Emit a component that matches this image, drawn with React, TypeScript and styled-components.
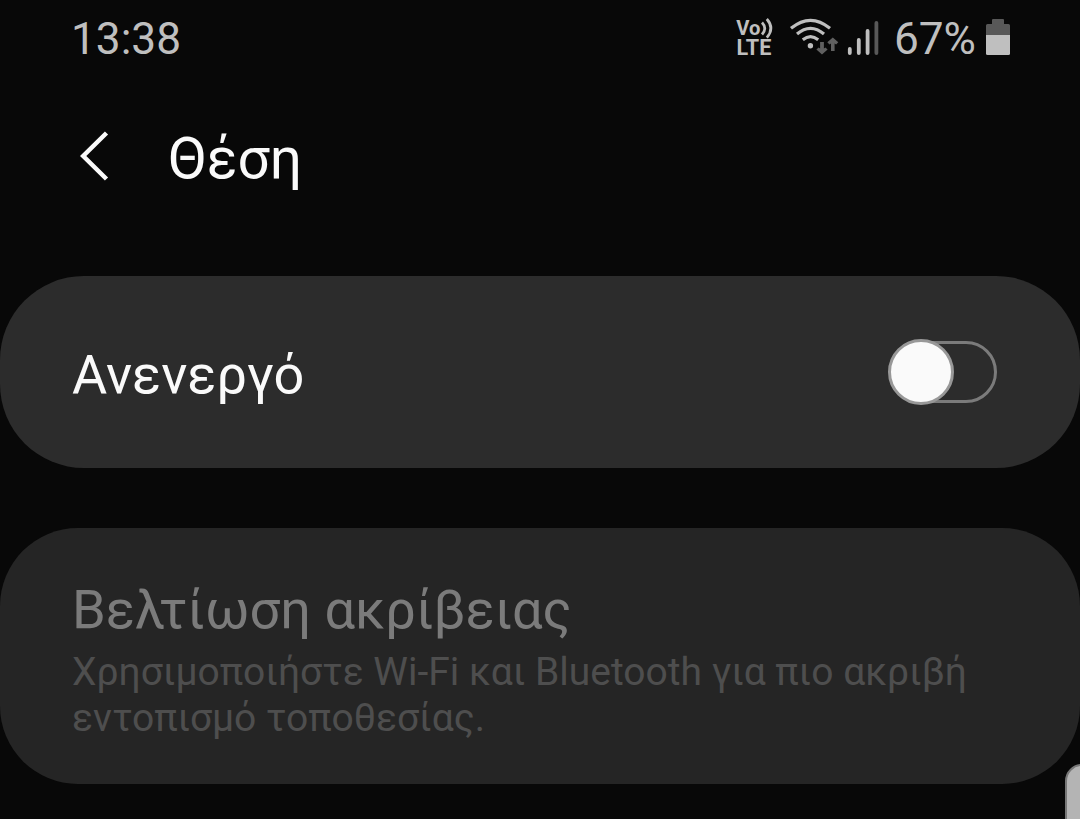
import React from 'react';
import styled, { createGlobalStyle } from 'styled-components';

const GlobalStyle = createGlobalStyle`
  *, *::before, *::after { box-sizing: border-box; }
  html, body { margin: 0; background: #080808; overflow: hidden; }
  body { font-family: Roboto, "Noto Sans", sans-serif; }
`;

const Screen = styled.main`
  position: relative;
  width: 1080px;
  height: 819px;
  background: #080808;
  color: #fafafa;
  overflow: hidden;
`;

const StatusBar = styled.header`
  display: flex;
  justify-content: space-between;
  height: 77px;
  padding: 0 70px 0 71px;
  color: #bfbfbf;
  font-size: 44.2px;
  line-height: 78px;
`;

const StatusIcons = styled.div`
  display: flex;
  align-items: flex-start;
`;

const StatusGlyphs = styled.svg`
  display: block;
  width: 150px;
  height: 77px;
  margin-right: 11.5px;
`;

const BatteryIcon = styled.svg`
  display: block;
  width: 24px;
  height: 77px;
  margin-left: 10px;
`;

const TitleBar = styled.div`
  display: flex;
  align-items: center;
  height: 164px;
  padding-left: 80px;
`;

const BackButton = styled.button`
  display: flex;
  width: 88px;
  height: 50px;
  margin-top: -6px;
  padding: 0;
  border: 0;
  background: none;
  color: #fafafa;
`;

const Title = styled.h1`
  margin: 0 0 1px;
  font-size: 57px;
  line-height: 69px;
  font-weight: 400;
`;

const Cards = styled.div`
  display: flex;
  flex-direction: column;
  gap: 60px;
  margin-top: 35px;
`;

const SwitchCard = styled.section`
  display: flex;
  align-items: center;
  justify-content: space-between;
  height: 192px;
  padding: 0 83px 0 72px;
  border-radius: 84px;
  background: #2c2c2c;
`;

const SwitchLabel = styled.span`
  padding-top: 5px;
  font-size: 54px;
  line-height: 63px;
`;

const Track = styled.button`
  display: flex;
  align-items: center;
  width: 106px;
  height: 62px;
  padding: 0;
  border: 3px solid #7b7b7b;
  border-radius: 31px;
  background: transparent;
`;

const Knob = styled.span`
  flex: none;
  width: 66px;
  height: 66px;
  margin-left: -6px;
  border: 3px solid #989898;
  border-radius: 50%;
  background: #fafafa;
`;

const OptionCard = styled.section`
  height: 256px;
  padding: 50px 72px 0;
  border-radius: 78px;
  background: #252525;
`;

const OptionTitle = styled.h2`
  margin: 0 0 8px;
  color: #7b7b7b;
  font-size: 54.2px;
  line-height: 63px;
  font-weight: 400;
`;

const OptionText = styled.p`
  margin: 0;
  color: #4e4e4e;
  font-size: 39px;
  line-height: 46px;
  white-space: nowrap;
`;

const EdgeHandle = styled.div`
  position: absolute;
  left: 1065px;
  top: 764px;
  width: 40px;
  height: 90px;
  border: 2px solid #777;
  border-radius: 17px;
  background: #b4b4b4;
`;

export default function App() {
  return (
    <Screen>
      <GlobalStyle />
      <StatusBar>
        <span>13:38</span>
        <StatusIcons>
          <StatusGlyphs viewBox="732 0 150 77" fill="none" strokeLinecap="round">
            <g fill="#bfbfbf" fontFamily="Roboto, sans-serif" fontWeight="700" fontSize="21">
              <text x="736.3" y="34.6" textLength="24.2" lengthAdjust="spacingAndGlyphs">Vo</text>
              <text x="736.5" y="55" fontSize="21.6" textLength="34.8" lengthAdjust="spacingAndGlyphs">LTE</text>
            </g>
            <g stroke="#bfbfbf" strokeWidth="2.7" strokeLinecap="butt">
              <path d="M762 22.5Q767.5 28.3 762 34.5" />
              <path d="M766.8 19Q775 28.3 766.8 37.6" />
            </g>
            <g stroke="#bfbfbf" strokeWidth="3.2" strokeLinecap="butt">
              <path d="M791 28.3Q810.5 12.3 830 28.3" />
              <path d="M797 34Q810.5 22.7 824 34" />
              <path d="M802.8 39.8Q810.5 33.5 818.2 39.8" />
            </g>
            <circle cx="810.4" cy="45.8" r="2.7" fill="#bfbfbf" />
            <g fill="#606060">
              <path d="M820.1 42h3.8v6.6l1.5-1.2 2.2 2.2-5.6 5-5.6-5 2.2-2.2 1.5 1.2z" />
              <path d="M831 51h3.6v-7.6l1.5 1.2 2.2-2.4-5.5-4.6-5.5 4.6 2.2 2.4 1.5-1.2z" />
            </g>
            <g strokeWidth="3.8">
              <path stroke="#bfbfbf" d="M849.8 49v4M858.8 40v13M867.6 31v22" />
              <path stroke="#585858" d="M876.4 23v30" />
            </g>
          </StatusGlyphs>
          <span>67%</span>
          <BatteryIcon viewBox="0 0 24 77">
            <path fill="#585858" d="M7 19h10a1 1 0 0 1 1 1v4h4.5a1.5 1.5 0 0 1 1.5 1.5V35H0v-9.5A1.5 1.5 0 0 1 1.5 24H6v-4a1 1 0 0 1 1-1z" />
            <path fill="#bfbfbf" d="M0 35h24v18.5a1.5 1.5 0 0 1-1.5 1.5h-21A1.5 1.5 0 0 1 0 53.5z" />
          </BatteryIcon>
        </StatusIcons>
      </StatusBar>
      <TitleBar>
        <BackButton aria-label="Πίσω">
          <svg width="30" height="50" viewBox="0 0 30 50" fill="none" stroke="currentColor" strokeWidth="4.5">
            <path d="M26.5 2 3.2 25 26.5 48" />
          </svg>
        </BackButton>
        <Title>Θέση</Title>
      </TitleBar>
      <Cards>
        <SwitchCard>
          <SwitchLabel>Ανενεργό</SwitchLabel>
          <Track role="switch" aria-checked="false">
            <Knob />
          </Track>
        </SwitchCard>
        <OptionCard>
          <OptionTitle>Βελτίωση ακρίβειας</OptionTitle>
          <OptionText>
            Χρησιμοποιήστε Wi-Fi και Bluetooth για πιο ακριβή
            <br />
            εντοπισμό τοποθεσίας.
          </OptionText>
        </OptionCard>
      </Cards>
      <EdgeHandle />
    </Screen>
  );
}
